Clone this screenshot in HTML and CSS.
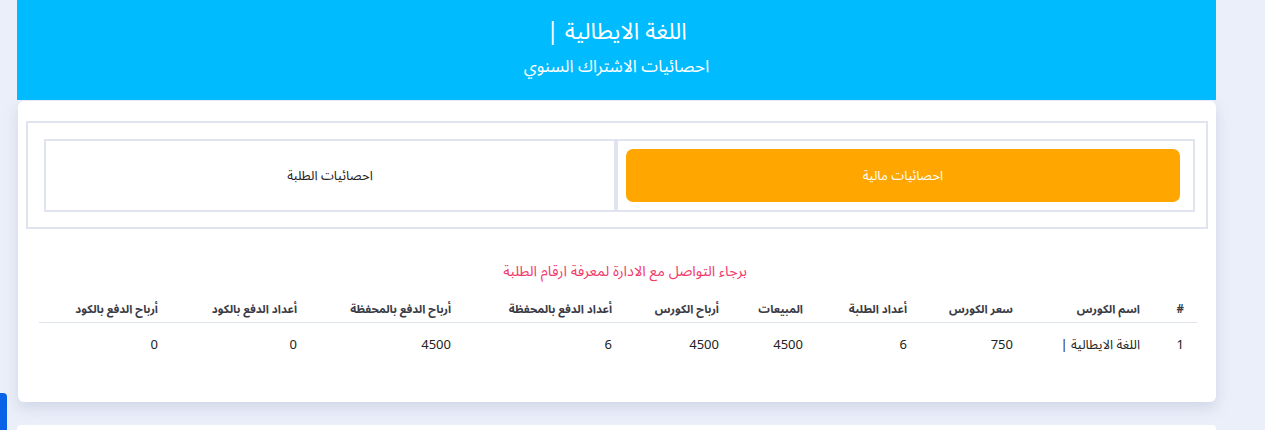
FILE: index.html
```html
<!DOCTYPE html>
<html lang="ar" dir="rtl">
<head>
<meta charset="utf-8">
<title>احصائيات الاشتراك السنوي</title>
<link rel="stylesheet" href="styles.css">
</head>
<body>
<div class="page">
  <header class="hero">
    <h1 class="hero-title">اللغة الايطالية |</h1>
    <p class="hero-sub">احصائيات الاشتراك السنوي</p>
  </header>

  <section class="card">
    <div class="tabs-box">
      <div class="tabs-row">
        <div class="tab tab-active"><button class="tab-btn">احصائيات مالية</button></div>
        <div class="tab"><span class="tab-label">احصائيات الطلبة</span></div>
      </div>
    </div>

    <p class="notice">برجاء التواصل مع الادارة لمعرفة ارقام الطلبة</p>

    <table class="stats">
      <colgroup>
        <col class="c1"><col class="c2"><col class="c3"><col class="c4"><col class="c5">
        <col class="c6"><col class="c7"><col class="c8"><col class="c9"><col class="c10">
      </colgroup>
      <thead>
        <tr>
          <th>#</th>
          <th>اسم الكورس</th>
          <th>سعر الكورس</th>
          <th>أعداد الطلبة</th>
          <th>المبيعات</th>
          <th>أرباح الكورس</th>
          <th>أعداد الدفع بالمحفظة</th>
          <th>أرباح الدفع بالمحفظة</th>
          <th>أعداد الدفع بالكود</th>
          <th>أرباح الدفع بالكود</th>
        </tr>
      </thead>
      <tbody>
        <tr>
          <td>1</td>
          <td>اللغة الايطالية |</td>
          <td>750</td>
          <td>6</td>
          <td>4500</td>
          <td>4500</td>
          <td>6</td>
          <td>4500</td>
          <td>0</td>
          <td>0</td>
        </tr>
      </tbody>
    </table>
  </section>

  <section class="card card-next"></section>
</div>
<div class="side-tab"></div>
</body>
</html>
```

FILE: styles.css
```css
html, body {
  margin: 0;
  padding: 0;
}
body {
  background: #ebeff9;
  font-family: "Noto Sans Arabic", "DejaVu Sans", sans-serif;
  color: #333;
  height: 430px;
  overflow: hidden;
}
.page {
  width: 1199px;
  margin: 0 49px 0 17px;
  display: flex;
  flex-direction: column;
}
.hero {
  background: #01bbff;
  height: 100px;
  display: flex;
  flex-direction: column;
  align-items: center;
  justify-content: flex-start;
  color: #fff;
  box-sizing: border-box;
  padding-top: 18px;
}
.hero-title {
  margin: 0;
  font-size: 23px;
  font-weight: 400;
  line-height: 28px;
}
.hero-sub {
  margin: 10px 0 0;
  font-size: 17px;
  line-height: 22px;
}
.card {
  background: #fff;
  margin-top: 1px;
  margin-left: 1px;
  border-radius: 6px;
  box-shadow: 0 6px 14px rgba(160, 170, 200, 0.35);
  padding: 20px 8px 0;
  height: 301px;
  box-sizing: border-box;
}
.card-next {
  margin-top: 23px;
  margin-left: 0;
  height: 40px;
  border-radius: 4px;
  box-shadow: none;
}
.tabs-box {
  border: 2px solid #dfe4ef;
  padding: 16px 11px 15px 16px;
  height: 108px;
  box-sizing: border-box;
}
.tabs-row {
  display: flex;
  height: 73px;
}
.tab {
  border: 2px solid #dfe4ef;
  box-sizing: border-box;
  display: flex;
  align-items: center;
  justify-content: center;
}
.tab-active {
  width: 579px;
  padding: 8px 13px 8px 8px;
}
.tab + .tab {
  flex: 1;
}
.tab-btn {
  width: 100%;
  height: 100%;
  background: #ffa700;
  border: none;
  border-radius: 7px;
  color: #fff;
  font-family: inherit;
  font-size: 13px;
  padding: 0;
}
.tab-label {
  font-size: 13px;
  color: #222;
}
.notice {
  margin: 33px 0 0;
  text-align: center;
  color: #f23a6c;
  font-size: 14.5px;
  line-height: 20px;
  padding-left: 16px;
}
.stats {
  margin: 16px 11px 0 11px;
  width: 1158px;
  border-collapse: collapse;
  table-layout: fixed;
}
.c1 { width: 44px; }
.c2 { width: 127px; }
.c3 { width: 106px; }
.c4 { width: 104px; }
.c5 { width: 84px; }
.c6 { width: 107px; }
.c7 { width: 161px; }
.c8 { width: 154px; }
.c9 { width: 139px; }
.c10 { width: 132px; }
.stats th {
  text-align: right;
  font-size: 11.5px;
  font-weight: 700;
  color: #3b3b45;
  padding: 3px 13px 5px 0;
  line-height: 16px;
  vertical-align: top;
  border-bottom: 1px solid #dfe3ee;
  white-space: nowrap;
}
.stats td {
  text-align: right;
  font-size: 13px;
  color: #222;
  padding: 0 13px 0 0;
  height: 44px;
  vertical-align: middle;
  white-space: nowrap;
}
.side-tab {
  position: fixed;
  left: 0;
  top: 393px;
  width: 7px;
  height: 40px;
  background: #0a62e6;
  border-radius: 0 4px 0 0;
}
```
